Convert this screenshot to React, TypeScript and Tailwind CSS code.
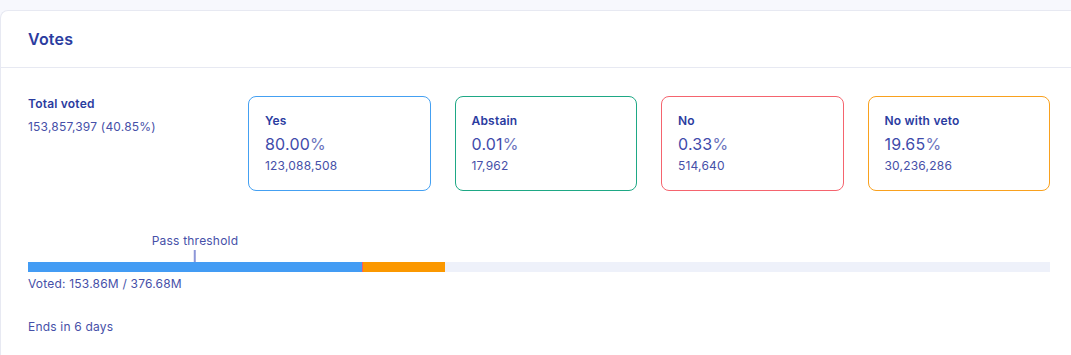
const options = [
  { label: "Yes", pct: "80.00", count: "123,088,508", border: "border-[#44a0f2]" },
  { label: "Abstain", pct: "0.01", count: "17,962", border: "border-[#1ea885]" },
  { label: "No", pct: "0.33", count: "514,640", border: "border-[#f5646e]" },
  { label: "No with veto", pct: "19.65", count: "30,236,286", border: "border-[#f9a11e]" },
];

const turnout = 40.85;
const bar = [
  { w: 80.0, color: "bg-[#439cf4]" },
  { w: 0.01, color: "bg-[#9aa2c8]" },
  { w: 0.33, color: "bg-[#f25a6a]" },
  { w: 19.65, color: "bg-[#fb9800]" },
];
const threshold = 40;

export default function App() {
  return (
    <div className="min-h-screen bg-[#f7f8fd] pt-[10px] font-['Inter',sans-serif] overflow-hidden">
      <div className="bg-white border-l border-t border-[#e7e9f2] rounded-tl-lg min-h-[345px]">
        <div className="h-[57px] flex items-center pl-[27px] border-b border-[#e7e9f2]">
          <h2 className="text-[16px] font-semibold text-[#2b3c9f] leading-5 tracking-[0.2px]">Votes</h2>
        </div>

        <div className="pl-[27px] pr-[21px] pt-7 tracking-[0.2px]">
          <div className="flex">
            <div className="w-[220px] shrink-0">
              <div className="text-[12px] leading-4 font-semibold text-[#2b3c9f]">Total voted</div>
              <div className="text-[12px] leading-4 mt-[7px] text-[#4650a8]">153,857,397 (40.85%)</div>
            </div>
            <div className="flex-1 grid grid-cols-4 gap-6">
              {options.map(o => (
                <div key={o.label} className={`border ${o.border} rounded-lg px-4 pt-4 pb-4 h-[95px]`}>
                  <div className="text-[12px] leading-4 font-semibold text-[#2b3c9f]">{o.label}</div>
                  <div className="text-[16px] leading-5 mt-[5px] text-[#3f4bab]">
                    {o.pct}<span className="text-[#6a73bd]">%</span>
                  </div>
                  <div className="text-[12px] leading-4 mt-1 text-[#4650a8]">{o.count}</div>
                </div>
              ))}
            </div>
          </div>

          <div className="relative mt-[71px]">
            <div className="absolute bottom-full flex flex-col items-center -translate-x-1/2" style={{ left: `${(threshold * turnout) / 100}%` }}>
              <span className="text-[12px] leading-4 text-[#4650a8] whitespace-nowrap mb-[1px]">Pass threshold</span>
              <span className="w-[2px] h-[12px] bg-[#8d97d8]" />
            </div>
            <div className="h-[10px] bg-[#eef1fa] flex">
              {bar.map((s, i) => (
                <div key={i} className={`h-full ${s.color}`} style={{ width: `${(s.w * turnout) / 100}%` }} />
              ))}
            </div>
          </div>

          <div className="text-[12px] leading-4 mt-1 text-[#4650a8]">Voted: 153.86M / 376.68M</div>
          <div className="text-[12px] leading-4 mt-[27px] text-[#4650a8]">Ends in 6 days</div>
        </div>
      </div>
    </div>
  );
}
